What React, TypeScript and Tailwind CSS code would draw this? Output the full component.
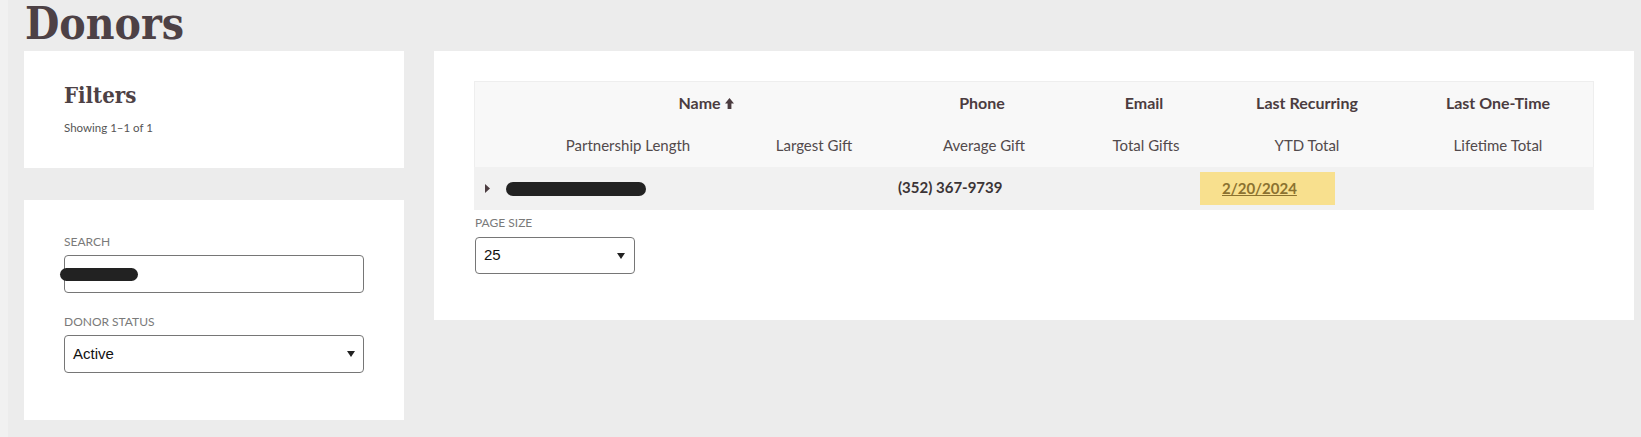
import React from "react";

const sans = { fontFamily: "Lato, 'Open Sans', sans-serif" };
const slab = { fontFamily: "'DejaVu Serif Condensed', 'DejaVu Serif', serif" };

function Caret({ className = "" }: { className?: string }) {
  return (
    <svg viewBox="0 0 8 6" className={className} aria-hidden="true">
      <path d="M0 0 L8 0 L4 6 Z" fill="currentColor" />
    </svg>
  );
}

function SortUp() {
  return (
    <svg viewBox="0 0 9 11" className="w-[9px] h-[11px] ml-[4px]" aria-hidden="true">
      <path d="M4.5 0 L9 5.5 L6.4 5.5 L6.4 11 L2.6 11 L2.6 5.5 L0 5.5 Z" fill="currentColor" />
    </svg>
  );
}

function FieldLabel({ children }: { children: React.ReactNode }) {
  return <div className="text-[12px] leading-[16px] uppercase text-[#7a7a7a]">{children}</div>;
}

function SelectBox({ value, className = "" }: { value: string; className?: string }) {
  return (
    <div
      className={
        "flex items-center justify-between border border-[#767676] rounded-[4px] bg-white text-[#111] text-[15px] " +
        className
      }
      style={{ fontFamily: "'Liberation Sans', Arial, sans-serif" }}
    >
      <span>{value}</span>
      <Caret className="w-[8px] h-[6px] text-[#222]" />
    </div>
  );
}

export default function App() {
  return (
    <div className="min-h-screen bg-[#ececec] flex" style={sans}>
      <div className="w-2 bg-[#f1f1f1]" />
      <div className="flex-1 pl-4">
        <h1
          className="text-[44px] leading-[48px] mb-[3px] ml-[1px] font-bold font-stretch-condensed text-[#4d4145]"
          style={slab}
        >
          Donors
        </h1>

        <div className="flex gap-[30px]">
          {/* Left column */}
          <div className="w-[380px] flex flex-col gap-[32px]">
            <div className="bg-white h-[117px] pl-10 pt-[31px]">
              <h2 className="text-[22px] leading-[26px] font-bold font-stretch-condensed text-[#4d4145]" style={slab}>
                Filters
              </h2>
              <p className="mt-[12px] text-[11.5px] leading-[16px] text-[#555]">Showing 1–1 of 1</p>
            </div>

            <div className="bg-white h-[220px] pl-10 pt-[34px]">
              <FieldLabel>Search</FieldLabel>
              <div className="relative mt-[5px] w-[300px] h-[38px] border border-[#767676] rounded-[4px] bg-white">
                <div className="absolute left-[-5px] top-[12px] w-[78px] h-[13px] rounded-full bg-[#222]" />
              </div>
              <div className="mt-[21px]">
                <FieldLabel>Donor Status</FieldLabel>
              </div>
              <SelectBox value="Active" className="mt-[5px] w-[300px] h-[38px] pl-2 pr-[8px]" />
            </div>
          </div>

          {/* Main card */}
          <div className="w-[1200px] h-[269px] bg-white pl-10 pt-[30px]">
            <div className="w-[1120px]">
              <div className="bg-[#f8f8f8] border border-[#eeeeee] border-b-0">
                <div className="flex items-center h-[42px] text-[16px] font-bold text-[#4b3c40]">
                  <div className="w-[110px] ml-[176px] flex items-center justify-center">
                    Name
                    <SortUp />
                  </div>
                  <div className="w-[110px] ml-[166px] text-center">Phone</div>
                  <div className="w-[110px] ml-[52px] text-center">Email</div>
                  <div className="w-[110px] ml-[53px] text-center">Last Recurring</div>
                  <div className="w-[110px] ml-[81px] text-center">Last One-Time</div>
                </div>
                <div className="flex items-center h-[43px] text-[15px] text-[#524a4c]">
                  <div className="w-[130px] ml-[88px] text-center">Partnership Length</div>
                  <div className="w-[110px] ml-[66px] text-center">Largest Gift</div>
                  <div className="w-[110px] ml-[60px] text-center">Average Gift</div>
                  <div className="w-[110px] ml-[52px] text-center">Total Gifts</div>
                  <div className="w-[110px] ml-[51px] text-center">YTD Total</div>
                  <div className="w-[110px] ml-[81px] text-center">Lifetime Total</div>
                </div>
              </div>

              <div className="flex items-center h-[43px] bg-[#f1f1f1] text-[15px] font-bold text-[#3b3436]">
                <svg viewBox="0 0 5 9" className="w-[5px] h-[9px] ml-[11px] text-[#4b3c40]" aria-hidden="true">
                  <path d="M0 0 L5 4.5 L0 9 Z" fill="currentColor" />
                </svg>
                <div className="ml-[16px] w-[140px] h-[14px] rounded-full bg-[#222]" />
                <div className="ml-[252px] w-[104px] whitespace-nowrap pb-[2px]">(352) 367-9739</div>
                <div className="ml-[198px] w-[135px] h-[33px] mt-[5px] mb-[5px] bg-[#f8e08e] flex items-center pl-[22px]">
                  <span className="underline text-[#8b7230]">2/20/2024</span>
                </div>
              </div>
            </div>

            <div className="mt-[5px] ml-[1px]">
              <FieldLabel>Page Size</FieldLabel>
            </div>
            <SelectBox value="25" className="mt-[6px] ml-[1px] w-[160px] h-[37px] pl-2 pr-[9px]" />
          </div>
        </div>
      </div>
    </div>
  );
}
